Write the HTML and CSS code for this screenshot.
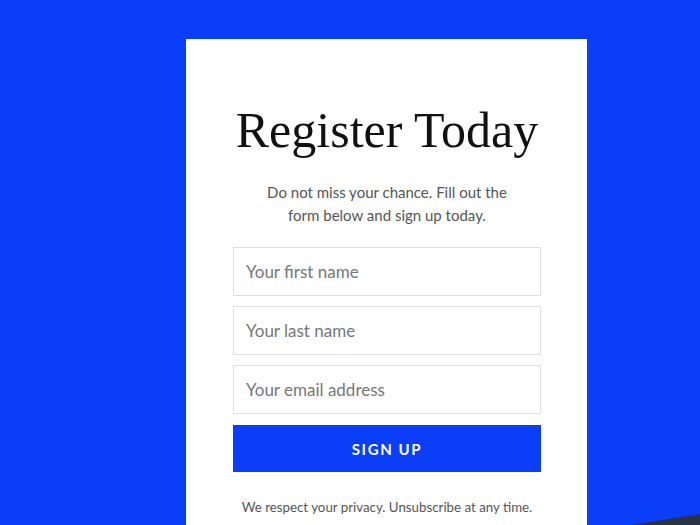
FILE: index.html
```html
<!DOCTYPE html>
<html lang="en">

<head>
    <meta charset="UTF-8">
    <meta name="viewport" content="width=device-width, initial-scale=1.0">
    <title>Register Today</title>
    <link rel="stylesheet" href="styles.css">
</head>

<body>

    <div class="card">
        <h1>Register Today</h1>
        <p class="intro">Do not miss your chance. Fill out the<br>form below and sign up today.</p>

        <form id="signupForm">
            <input type="text" name="first_name" placeholder="Your first name">
            <input type="text" name="last_name" placeholder="Your last name">
            <input type="email" name="email" placeholder="Your email address">
            <button type="submit">Sign up</button>
        </form>

        <p class="privacy">We respect your privacy. Unsubscribe at any time.</p>
    </div>

    <!-- dark corner of the next section -->
    <svg class="corner" width="70" height="14" viewBox="0 0 70 14">
        <polygon points="0,14 70,3 70,14" fill="#2c3340"/>
    </svg>

</body>

</html>
```

FILE: styles.css
```css
body {
    margin: 0;
    height: 525px;
    overflow: hidden;
    background: #0a3ef8;
    font-family: Lato, "Open Sans", sans-serif;
}

.card {
    width: 401px;
    margin: 39px 0 0 186px;
    padding: 61px 46px 40px 47px;
    box-sizing: border-box;
    background: #fff;
    text-align: center;
}

.card h1 {
    margin: 0 -10px;
    white-space: nowrap;
    font-family: "Liberation Serif", "DejaVu Serif", serif;
    font-weight: normal;
    font-size: 50px;
    line-height: 60px;
    color: #111;
}

.intro {
    margin: 21px 0 0;
    font-size: 15px;
    line-height: 23px;
    color: #555;
}

#signupForm {
    margin-top: 20px;
    display: flex;
    flex-direction: column;
    gap: 10px;
}

#signupForm input {
    height: 49px;
    padding: 0 12px;
    border: 1px solid #e0e0e0;
    font-family: inherit;
    font-size: 17px;
    color: #333;
    box-sizing: border-box;
    outline: none;
}

#signupForm input::placeholder {
    color: #777;
}

#signupForm button {
    margin-top: 1px;
    height: 47px;
    border: 0;
    background: #0a3ef8;
    color: #fff;
    font-family: inherit;
    font-weight: bold;
    font-size: 15px;
    letter-spacing: 1.6px;
    text-transform: uppercase;
    cursor: pointer;
}

.privacy {
    margin: 25px 0 0;
    font-size: 13.3px;
    line-height: 20px;
    color: #555;
}

.corner {
    position: absolute;
    right: 0;
    bottom: 0;
}
```
